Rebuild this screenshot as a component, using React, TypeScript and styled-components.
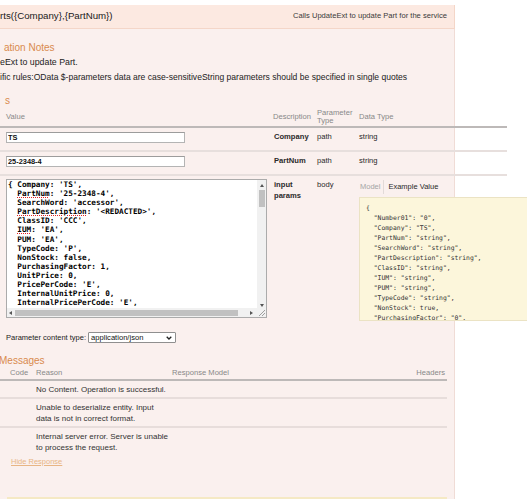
import React from "react";
import styled, { createGlobalStyle } from "styled-components";

const GlobalStyle = createGlobalStyle`
  html, body { margin: 0; padding: 0; background: #ffffff; }
  body { font-family: "Liberation Sans", Arial, sans-serif; overflow: hidden; }
  * { box-sizing: border-box; }
`;

const Page = styled.div`
  width: 527px;
  height: 499px;
  overflow: hidden;
  padding-top: 5px;
`;

const Panel = styled.div`
  width: 455px;
`;

const Heading = styled.div`
  height: 24px;
  display: flex;
  align-items: center;
  justify-content: space-between;
  padding: 0 7px 2px 0;
  background: #fce9e1;
  border-right: 1px solid #f4d6c8;
  border-bottom: 1px solid #f4d6c8;
`;

const PathText = styled.span`
  font-size: 9.7px;
  color: #1a1a1a;
  white-space: nowrap;
`;

const Summary = styled.span`
  font-size: 7.6px;
  color: #3a3a3a;
  white-space: nowrap;
`;

const Content = styled.div`
  height: 470px;
  background: #faf0ee;
  border-right: 1px solid #f0dcd6;
  padding-top: 12px;
`;

const SectionTitle = styled.h4<{ $top?: number; $left?: number }>`
  margin: ${(p) => p.$top ?? 0}px 0 0 ${(p) => p.$left ?? 0}px;
  font-size: 10px;
  line-height: 13px;
  font-weight: normal;
  color: #d98a4d;
  white-space: nowrap;
`;

const Note = styled.p<{ $top: number; $size?: number }>`
  margin: ${(p) => p.$top}px 0 0;
  font-size: ${(p) => p.$size ?? 8.8}px;
  line-height: 11px;
  color: #222;
  white-space: nowrap;
`;

/* ---------- parameters table ---------- */

const ParamTable = styled.div`
  width: 507px;
  display: grid;
  grid-template-columns: 273px 44px 42px 148px;
`;

const HeadCell = styled.div<{ $pad?: number }>`
  height: 21px;
  display: flex;
  align-items: center;
  padding-left: ${(p) => p.$pad ?? 0}px;
  font-size: 7.6px;
  line-height: 7.5px;
  color: #888;
  border-bottom: 2px solid #bdb9b8;
`;

const Cell = styled.div<{ $pad?: number; $last?: boolean; $top?: number; $bold?: boolean }>`
  padding: ${(p) => p.$top ?? 4}px 0 ${(p) => (p.$last ? 0 : 7)}px ${(p) => p.$pad ?? 0}px;
  border-bottom: ${(p) => (p.$last ? "none" : "2px solid #e7dfdd")};
  font-size: 7.6px;
  line-height: 10.5px;
  color: #2a2a2a;
  font-weight: ${(p) => (p.$bold ? "bold" : "normal")};
`;

const TextInput = styled.input`
  display: block;
  width: 179px;
  height: 11px;
  margin: 0;
  padding: 0 0 0 1px;
  border: 1px solid #b4b4b4;
  border-top-color: #9c9c9c;
  background: #fff;
  font-family: "Liberation Sans", Arial, sans-serif;
  font-weight: bold;
  font-size: 7.4px;
  color: #111;
  outline: none;
`;

const CodeArea = styled.div`
  width: 261px;
  height: 139px;
  border: 1px solid #ababab;
  background: #fff;
  display: grid;
  grid-template-columns: 1fr 9px;
  grid-template-rows: 1fr 9px;
`;

const CodeText = styled.pre`
  margin: 0;
  padding: 0 0 0 1px;
  overflow: hidden;
  font-family: "DejaVu Sans Mono", "Liberation Mono", monospace;
  font-weight: bold;
  font-size: 7.7px;
  line-height: 9.1px;
  color: #000;
`;

const Misspelled = styled.span`
  text-decoration-line: underline;
  text-decoration-style: dotted;
  text-decoration-color: #e02424;
  text-decoration-thickness: 1px;
  text-underline-offset: 0.5px;
`;

const VScroll = styled.div`
  background: #f1f1f1;
  display: flex;
  flex-direction: column;
  align-items: center;
  padding: 4px 0 1px;
`;

const HScroll = styled.div`
  background: #f1f1f1;
  display: flex;
  align-items: center;
  padding: 0 4px 0 2px;
`;

const Thumb = styled.div<{ $horizontal?: boolean }>`
  background: #c1c1c1;
  ${(p) =>
    p.$horizontal
      ? "height: 6px; width: 223px; margin-left: 3px;"
      : "width: 6px; height: 17px; margin-top: 3px;"}
`;

const Arrow = styled.span<{ $dir: "up" | "down" | "left" | "right" }>`
  width: 0;
  height: 0;
  border-style: solid;
  border-color: transparent;
  ${(p) =>
    p.$dir === "up"
      ? "border-width: 0 2.5px 3px; border-bottom-color: #555;"
      : p.$dir === "down"
      ? "border-width: 3px 2.5px 0; border-top-color: #555; margin-top: auto;"
      : p.$dir === "left"
      ? "border-width: 2.5px 3px 2.5px 0; border-right-color: #555;"
      : "border-width: 2.5px 0 2.5px 3px; border-left-color: #555; margin-left: auto;"}
`;

const Corner = styled.div`
  background: #f1f1f1;
  display: flex;
`;

const Tabs = styled.div`
  height: 14px;
  display: flex;
  align-items: center;
  font-size: 7.5px;
`;

const Tab = styled.span<{ $active?: boolean }>`
  color: ${(p) => (p.$active ? "#2a2a2a" : "#a5a5a5")};
  padding: ${(p) => (p.$active ? "0 0 0 4px" : "0 3px 0 1px")};
  border-right: ${(p) => (p.$active ? "none" : "1px solid #e2dad8")};
  line-height: 14px;
`;

const Snippet = styled.pre`
  margin: 3px 0 0;
  width: 175px;
  height: 124px;
  overflow: hidden;
  background: #fcf6db;
  border: 1px solid #ebe3c4;
  padding: 5px 0 0 6px;
  font-family: "DejaVu Sans Mono", "Liberation Mono", monospace;
  font-size: 6.4px;
  line-height: 10px;
  color: #333;
`;

/* ---------- content type ---------- */

const ContentTypeRow = styled.div`
  margin-top: 10px;
  height: 13px;
  display: flex;
  align-items: center;
  padding-left: 6px;
  font-size: 7.5px;
  color: #222;
`;

const SelectBox = styled.div`
  width: 88px;
  height: 11px;
  margin-left: 2px;
  border: 1px solid #8f8f8f;
  border-radius: 1px;
  background: #fff;
  display: flex;
  align-items: center;
  justify-content: space-between;
  padding: 0 3px 0 2px;
  font-size: 7.6px;
  color: #111;
`;

/* ---------- responses table ---------- */

const ResponseTable = styled.div`
  width: 447px;
  display: grid;
  grid-template-columns: 36px 136px 1fr 48px;
`;

const RHead = styled.div<{ $pad?: number; $right?: boolean }>`
  height: 14px;
  padding-left: ${(p) => p.$pad ?? 0}px;
  padding-right: ${(p) => (p.$right ? 2 : 0)}px;
  text-align: ${(p) => (p.$right ? "right" : "left")};
  font-size: 7.6px;
  line-height: 12px;
  color: #888;
  border-bottom: 2px solid #bdb9b8;
`;

const RCell = styled.div<{ $last?: boolean }>`
  padding: 4px 0 2px;
  border-bottom: ${(p) => (p.$last ? "none" : "2px solid #e7dddb")};
  font-size: 8px;
  line-height: 10.5px;
  color: #333;
  white-space: nowrap;
`;

const ReasonLine = styled.span`
  display: block;
`;

const HideLink = styled.a`
  display: block;
  margin: 1.5px 0 0 11px;
  width: max-content;
  font-size: 7.5px;
  line-height: 10px;
  color: #e8b584;
  text-decoration: underline;
  cursor: pointer;
`;

const NextSection = styled.div`
  margin: 30px 0 0 7px;
  width: 440px;
  border-top: 2px solid #f5e9c4;
`;

const requestBody = (
  <>
    {"{ Company: 'TS',\n  "}
    <Misspelled>PartNum</Misspelled>
    {": '25-2348-4',\n  SearchWord: 'accessor',\n  "}
    <Misspelled>PartDescription</Misspelled>
    {": '<REDACTED>',\n  ClassID: 'CCC',\n  "}
    <Misspelled>IUM</Misspelled>
    {": 'EA',\n  PUM: 'EA',\n  TypeCode: 'P',\n  NonStock: false,\n  PurchasingFactor: 1,\n  UnitPrice: 0,\n  PricePerCode: 'E',\n  InternalUnitPrice: 0,\n  InternalPricePerCode: 'E',\n  ProdCode: '1120',\n  MtlBurRate: 0"}
  </>
);

const exampleValue = `{
  "Number01": "0",
  "Company": "TS",
  "PartNum": "string",
  "SearchWord": "string",
  "PartDescription": "string",
  "ClassID": "string",
  "IUM": "string",
  "PUM": "string",
  "TypeCode": "string",
  "NonStock": true,
  "PurchasingFactor": "0",
  "UnitPrice": "0"
}`;

const responses: string[][] = [
  ["No Content. Operation is successful."],
  ["Unable to deserialize entity. Input", "data is not in correct format."],
  ["Internal server error. Server is unable", "to process the request."],
];

export default function App() {
  return (
    <>
      <GlobalStyle />
      <Page>
        <Panel>
          <Heading>
            <PathText>rts({"{Company}"},{"{PartNum}"})</PathText>
            <Summary>Calls UpdateExt to update Part for the service</Summary>
          </Heading>
          <Content>
            <SectionTitle $left={4}>ation Notes</SectionTitle>
            <Note $top={3}>eExt to update Part.</Note>
            <Note $top={4} $size={8.55}>
              ific rules:OData $-parameters data are case-sensitiveString parameters should be specified in single quotes
            </Note>
            <SectionTitle $top={11} $left={5}>s</SectionTitle>

            <ParamTable>
              <HeadCell $pad={6}>Value</HeadCell>
              <HeadCell>Description</HeadCell>
              <HeadCell>
                Parameter
                <br />
                Type
              </HeadCell>
              <HeadCell>Data Type</HeadCell>

              <Cell $pad={6}>
                <TextInput defaultValue="TS" />
              </Cell>
              <Cell $pad={1} $bold>Company</Cell>
              <Cell>path</Cell>
              <Cell>string</Cell>

              <Cell $pad={6}>
                <TextInput defaultValue="25-2348-4" />
              </Cell>
              <Cell $pad={1} $bold>PartNum</Cell>
              <Cell>path</Cell>
              <Cell>string</Cell>

              <Cell $pad={6} $last $top={3}>
                <CodeArea>
                  <CodeText>{requestBody}</CodeText>
                  <VScroll>
                    <Arrow $dir="up" />
                    <Thumb />
                    <Arrow $dir="down" />
                  </VScroll>
                  <HScroll>
                    <Arrow $dir="left" />
                    <Thumb $horizontal />
                    <Arrow $dir="right" />
                  </HScroll>
                  <Corner>
                    <svg width="9" height="9" viewBox="0 0 9 9">
                      <path d="M8 2L2 8M8 5L5 8" stroke="#8a8a8a" strokeWidth="0.8" />
                    </svg>
                  </Corner>
                </CodeArea>
              </Cell>
              <Cell $pad={1} $last $bold>
                input params
              </Cell>
              <Cell $last>body</Cell>
              <Cell $last>
                <Tabs>
                  <Tab>Model</Tab>
                  <Tab $active>Example Value</Tab>
                </Tabs>
                <Snippet>{exampleValue}</Snippet>
              </Cell>
            </ParamTable>

            <ContentTypeRow>
              Parameter content type:
              <SelectBox>
                <span>application/json</span>
                <svg width="6" height="4" viewBox="0 0 6 4">
                  <path d="M0.7 0.7L3 3L5.3 0.7" fill="none" stroke="#222" strokeWidth="1.3" />
                </svg>
              </SelectBox>
            </ContentTypeRow>

            <SectionTitle $top={9.5} $left={-1}>Messages</SectionTitle>

            <ResponseTable>
              <RHead $pad={10}>Code</RHead>
              <RHead>Reason</RHead>
              <RHead>Response Model</RHead>
              <RHead $right>Headers</RHead>
              {responses.map((lines, i) => {
                const last = i === responses.length - 1;
                return (
                  <React.Fragment key={i}>
                    <RCell $last={last} />
                    <RCell $last={last}>
                      {lines.map((l) => (
                        <ReasonLine key={l}>{l}</ReasonLine>
                      ))}
                    </RCell>
                    <RCell $last={last} />
                    <RCell $last={last} />
                  </React.Fragment>
                );
              })}
            </ResponseTable>

            <HideLink>Hide Response</HideLink>
            <NextSection />
          </Content>
        </Panel>
      </Page>
    </>
  );
}
